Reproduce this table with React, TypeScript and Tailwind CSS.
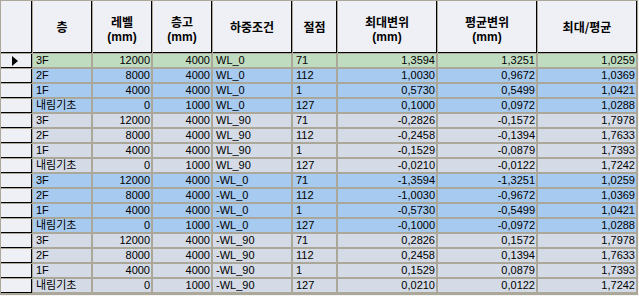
import React from "react";

type Row = [string, string, string, string, string, string, string, string, string];

const G = "bg-[#c0dcc0]";
const B = "bg-[#a6caf0]";
const S = "bg-[#d4dbe6]";

const rows: Row[] = [
  ["3F", "12000", "4000", "WL_0", "71", "1,3594", "1,3251", "1,0259", G],
  ["2F", "8000", "4000", "WL_0", "112", "1,0030", "0,9672", "1,0369", B],
  ["1F", "4000", "4000", "WL_0", "1", "0,5730", "0,5499", "1,0421", B],
  ["내림기초", "0", "1000", "WL_0", "127", "0,1000", "0,0972", "1,0288", B],
  ["3F", "12000", "4000", "WL_90", "71", "-0,2826", "-0,1572", "1,7978", S],
  ["2F", "8000", "4000", "WL_90", "112", "-0,2458", "-0,1394", "1,7633", S],
  ["1F", "4000", "4000", "WL_90", "1", "-0,1529", "-0,0879", "1,7393", S],
  ["내림기초", "0", "1000", "WL_90", "127", "-0,0210", "-0,0122", "1,7242", S],
  ["3F", "12000", "4000", "-WL_0", "71", "-1,3594", "-1,3251", "1,0259", B],
  ["2F", "8000", "4000", "-WL_0", "112", "-1,0030", "-0,9672", "1,0369", B],
  ["1F", "4000", "4000", "-WL_0", "1", "-0,5730", "-0,5499", "1,0421", B],
  ["내림기초", "0", "1000", "-WL_0", "127", "-0,1000", "-0,0972", "1,0288", B],
  ["3F", "12000", "4000", "-WL_90", "71", "0,2826", "0,1572", "1,7978", S],
  ["2F", "8000", "4000", "-WL_90", "112", "0,2458", "0,1394", "1,7633", S],
  ["1F", "4000", "4000", "-WL_90", "1", "0,1529", "0,0879", "1,7393", S],
  ["내림기초", "0", "1000", "-WL_90", "127", "0,0210", "0,0122", "1,7242", S],
];

const headers: string[][] = [
  ["층"],
  ["레벨", "(mm)"],
  ["층고", "(mm)"],
  ["하중조건"],
  ["절점"],
  ["최대변위", "(mm)"],
  ["평균변위", "(mm)"],
  ["최대/평균"],
];

const align = ["l", "r", "r", "l", "l", "r", "r", "r"];

export default function App() {
  return (
    <div className="w-[639px] h-[296px] bg-[#f4f4f4] overflow-hidden">
      <div
        className="w-[638px] h-[295px] bg-[#aca899] pt-px pl-px grid gap-px grid-cols-[31px_59px_59px_59px_79px_44px_99px_99px_99px] grid-rows-[52px_repeat(16,14px)] text-black"
        style={{ fontFamily: '"Liberation Sans", "Noto Sans CJK KR", sans-serif' }}
      >
        <div className="bg-[#eff0f5] border-r border-b border-black" />
        {headers.map((h, i) => (
          <div
            key={i}
            className={`bg-[#eff0f5] border-r border-b border-black flex flex-col items-center justify-center font-bold text-[12px] ${
              h.length > 1 ? "pt-[3px]" : ""
            }`}
          >
            <span
              className="block leading-[17px]"
              style={{ fontFamily: '"Noto Sans CJK KR", "Liberation Sans", sans-serif' }}
            >
              {h[0]}
            </span>
            {h[1] && (
              <span
                className="block leading-[14px]"
                style={{ fontFamily: '"Liberation Sans", sans-serif' }}
              >
                {h[1]}
              </span>
            )}
          </div>
        ))}
        {rows.map((r, ri) => (
          <React.Fragment key={ri}>
            <div className="bg-[#eff0f5] border-r border-b border-black flex items-center justify-center">
              {ri === 0 && (
                <svg width="6" height="10" viewBox="0 0 6 10" className="ml-[-2px]">
                  <polygon points="0,0 6,5 0,10" fill="#000" />
                </svg>
              )}
            </div>
            {r.slice(0, 8).map((c, ci) => (
              <div
                key={ci}
                className={`${r[8]} border-r border-b border-[#aca899] flex items-center text-[11px] leading-[13px] whitespace-nowrap overflow-hidden ${
                  align[ci] === "r" ? "justify-end pr-[1px]" : "justify-start pl-[3px]"
                }`}
              >
                {c}
              </div>
            ))}
          </React.Fragment>
        ))}
      </div>
    </div>
  );
}
